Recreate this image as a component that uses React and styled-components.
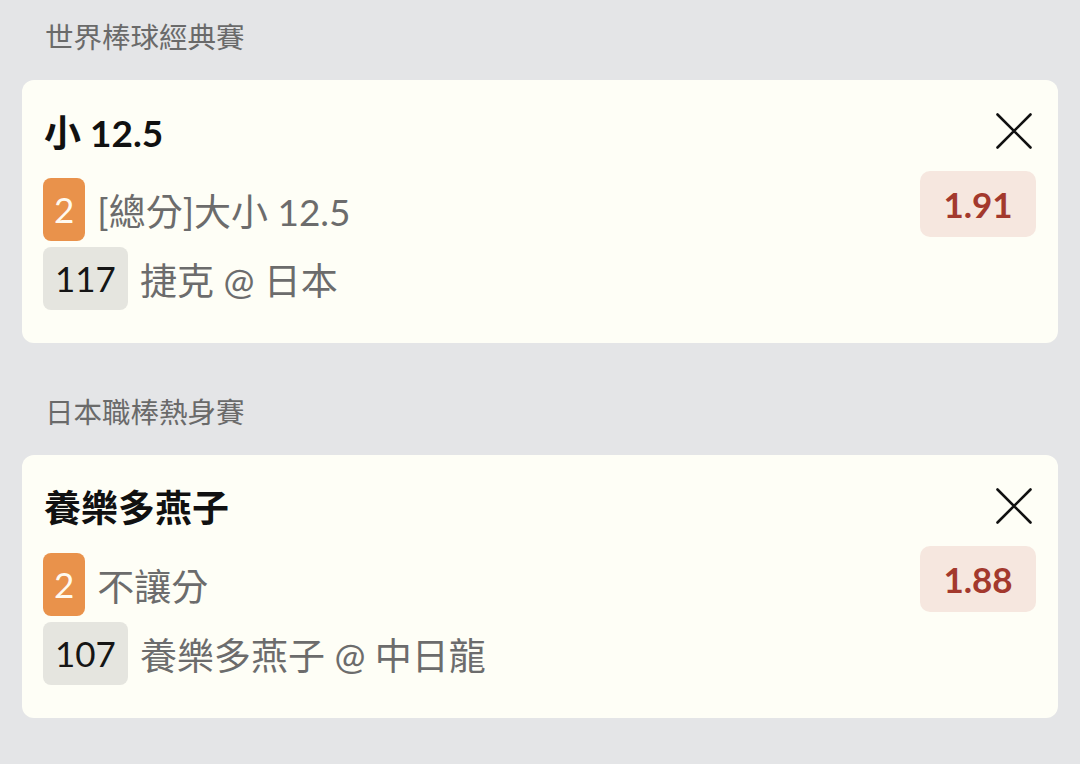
import styled, { createGlobalStyle } from "styled-components";

const GlobalStyle = createGlobalStyle`
    html, body {
        margin: 0;
        padding: 0;
        background: #e4e5e7;
    }
    body {
        font-family: Lato, "Noto Sans CJK TC", sans-serif;
        width: 1080px;
        height: 764px;
        overflow: hidden;
    }
`;

const Page = styled.div`
    display: flex;
    flex-direction: column;
    gap: 32px;
    padding: 0 22px;
`;

const Section = styled.section`
    display: flex;
    flex-direction: column;
`;

const SectionLabel = styled.div`
    padding: 17px 0 0 23px;
    height: 40px;
    line-height: 40px;
    margin-bottom: 23px;
    font-size: 28.5px;
    color: #6a6a6a;
`;

const Card = styled.div`
    background: #fefef6;
    border-radius: 12px;
    padding: 28px 22px 33px 21px;
    display: flex;
    flex-direction: column;
`;

const Header = styled.div`
    height: 46px;
    display: flex;
    align-items: center;
    justify-content: space-between;
`;

const Title = styled.span`
    font-size: 37px;
    font-weight: 700;
    color: #111;
    padding-left: 1px;
`;

const CloseButton = styled.button`
    width: 44px;
    height: 44px;
    padding: 0;
    border: none;
    background: transparent;
    display: flex;
    align-items: center;
    justify-content: center;
`;

const Body = styled.div`
    margin-top: 17px;
    display: flex;
    justify-content: space-between;
    align-items: flex-start;
`;

const Lines = styled.div`
    margin-top: 7px;
    display: flex;
    flex-direction: column;
    gap: 6px;
`;

const Line = styled.div`
    display: flex;
    align-items: center;
    gap: 12px;
`;

const Badge = styled.span`
    height: 63px;
    line-height: 63px;
    padding: 0 ${(p) => (p.$tone === "orange" ? "11px" : "12px")};
    border-radius: 8px;
    font-size: 35px;
    background: ${(p) => (p.$tone === "orange" ? "#e9924b" : "#e5e5df")};
    color: ${(p) => (p.$tone === "orange" ? "#fffaf0" : "#151515")};
`;

const Info = styled.span`
    font-size: 37px;
    color: #6c6c6c;
`;

const Odds = styled.div`
    width: 116px;
    height: 66px;
    border-radius: 10px;
    background: #f6e7df;
    color: #a3392d;
    font-size: 35px;
    font-weight: 700;
    display: flex;
    align-items: center;
    justify-content: center;
`;

const CloseIcon = () => (
    <svg width="44" height="44" viewBox="0 0 44 44" fill="none">
        <path d="M5.5 5.5 L38.5 38.5 M38.5 5.5 L5.5 38.5" stroke="#111" strokeWidth="2.6" strokeLinecap="round" />
    </svg>
);

const bets = [
    {
        league: "世界棒球經典賽",
        title: "小 12.5",
        market: "[總分]大小 12.5",
        period: "2",
        code: "117",
        match: "捷克 @ 日本",
        odds: "1.91",
    },
    {
        league: "日本職棒熱身賽",
        title: "養樂多燕子",
        market: "不讓分",
        period: "2",
        code: "107",
        match: "養樂多燕子 @ 中日龍",
        odds: "1.88",
    },
];

const App = () => {
    return (
        <>
            <GlobalStyle />
            <Page>
                {bets.map((bet) => (
                    <Section key={bet.code}>
                        <SectionLabel>{bet.league}</SectionLabel>
                        <Card>
                            <Header>
                                <Title>{bet.title}</Title>
                                <CloseButton aria-label="close">
                                    <CloseIcon />
                                </CloseButton>
                            </Header>
                            <Body>
                                <Lines>
                                    <Line>
                                        <Badge $tone="orange">{bet.period}</Badge>
                                        <Info>{bet.market}</Info>
                                    </Line>
                                    <Line>
                                        <Badge $tone="gray">{bet.code}</Badge>
                                        <Info>{bet.match}</Info>
                                    </Line>
                                </Lines>
                                <Odds>{bet.odds}</Odds>
                            </Body>
                        </Card>
                    </Section>
                ))}
            </Page>
        </>
    );
};

export default App;
